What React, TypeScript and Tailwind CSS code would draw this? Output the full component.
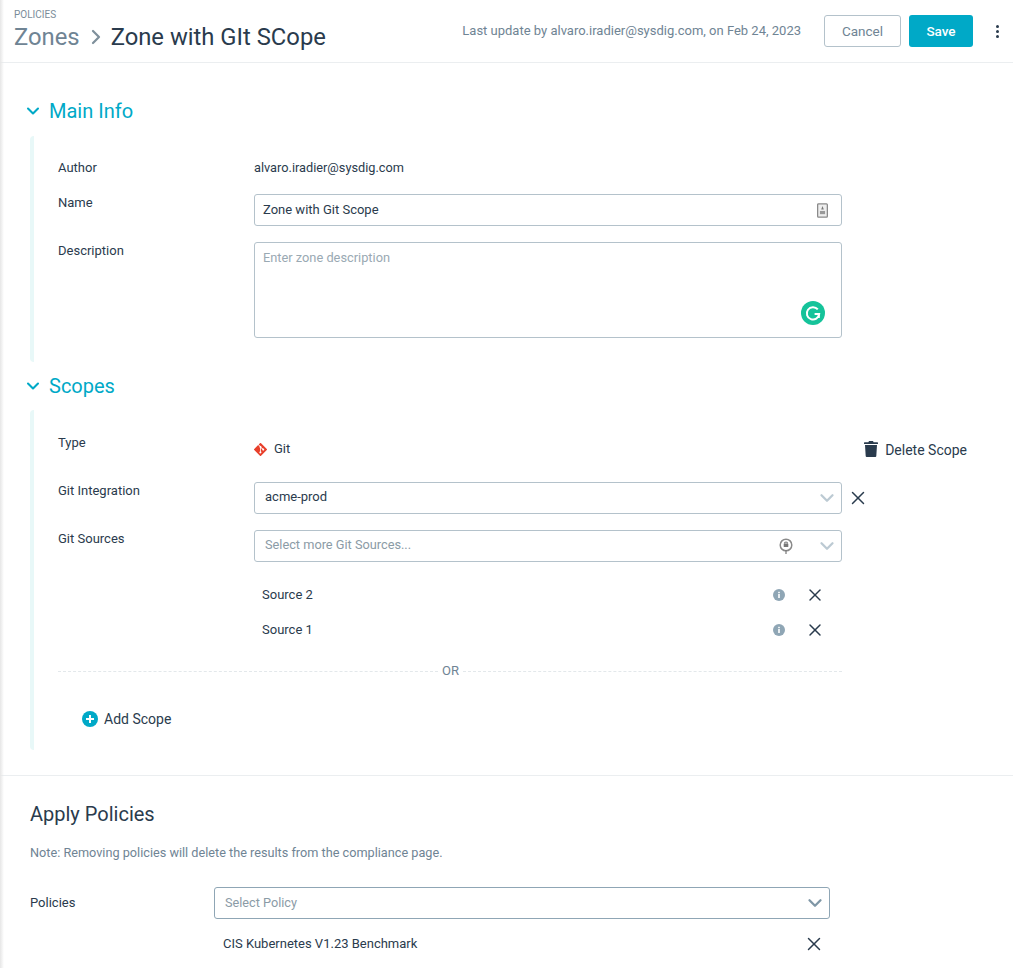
import { ChevronDown, ChevronRight, X } from "lucide-react";

function SectionHeading({ title }: { title: string }) {
  return (
    <div className="flex h-7 items-center pl-[23px]">
      <ChevronDown className="h-5 w-5 text-[#00a9c7]" strokeWidth={2.5} />
      <h2 className="ml-[6px] text-[20px] leading-7 text-[#00a9c7]">{title}</h2>
    </div>
  );
}

function GitIcon() {
  return (
    <svg viewBox="0 0 16 16" className="h-[13px] w-[13px]">
      <path
        fill="#e8402b"
        d="M15.7 7.3 8.7.3a1 1 0 0 0-1.4 0L5.8 1.8l1.8 1.8a1.2 1.2 0 0 1 1.5 1.5l1.8 1.8a1.2 1.2 0 1 1-.7.7L8.5 6v4.5a1.2 1.2 0 1 1-1-.1V5.9a1.2 1.2 0 0 1-.6-1.6L5.1 2.5.3 7.3a1 1 0 0 0 0 1.4l7 7a1 1 0 0 0 1.4 0l7-7a1 1 0 0 0 0-1.4Z"
      />
    </svg>
  );
}

function InfoIcon() {
  return (
    <svg viewBox="0 0 12 12" className="h-3 w-3">
      <circle cx="6" cy="6" r="6" fill="#8fa6b5" />
      <rect x="5.2" y="5" width="1.6" height="4" fill="#fff" />
      <rect x="5.2" y="2.8" width="1.6" height="1.4" fill="#fff" />
    </svg>
  );
}

function SourceRow({ name }: { name: string }) {
  return (
    <div className="flex h-[35px] w-[588px] items-center pl-2 pr-[17px]">
      <span className="flex-1">{name}</span>
      <InfoIcon />
      <X className="ml-5 h-5 w-5 text-[#2a3b4d]" strokeWidth={1.75} />
    </div>
  );
}

export default function App() {
  return (
    <div
      className="relative h-[968px] overflow-hidden bg-white text-[13px] leading-[18px] text-[#2a3b4d] antialiased"
      style={{ fontFamily: "Roboto, sans-serif" }}
    >
      <div className="absolute inset-y-0 left-0 w-[4px] bg-gradient-to-r from-[#e6e6e6] to-transparent" />

      <header className="flex h-[63px] items-center border-b border-[#ebeef0] pl-[14px] pr-[13px]">
        <div className="flex-1 pb-[2px]">
          <p className="text-[10px] leading-3 text-[#7a8c99]">POLICIES</p>
          <div className="mt-[1px] flex items-center text-[23.8px] leading-[30px]">
            <span className="text-[#6f8494]">Zones</span>
            <ChevronRight className="ml-[4px] mr-[3px] h-6 w-6 text-[#7f909c]" strokeWidth={2.25} />
            <span>Zone with GIt SCope</span>
          </div>
        </div>
        <span className="text-[#6f8494]">
          Last update by alvaro.iradier@sysdig.com, on Feb 24, 2023
        </span>
        <button className="ml-[23px] h-[32px] w-[77px] rounded-[3px] border border-[#b4c2cb] text-[13.5px] text-[#6f8494]">
          Cancel
        </button>
        <button className="ml-2 h-[32px] w-[64px] rounded-[3px] bg-[#00a9c7] text-[13.5px] font-medium text-white">
          Save
        </button>
        <div className="ml-[21px] flex w-[6px] flex-col items-center gap-[2px]">
          <span className="h-[3px] w-[3px] rounded-full bg-[#2a3b4d]" />
          <span className="h-[3px] w-[3px] rounded-full bg-[#2a3b4d]" />
          <span className="h-[3px] w-[3px] rounded-full bg-[#2a3b4d]" />
        </div>
      </header>

      <section className="pt-[34px]">
        <SectionHeading title="Main Info" />
        <div className="ml-[30px] mt-[11px] h-[226px] rounded-sm border-l-4 border-[#e8f8f8] pl-6 pt-[21px]">
          <div className="flex h-[22px] items-center">
            <span className="w-[196px]">Author</span>
            <span className="text-[12.75px]">alvaro.iradier@sysdig.com</span>
          </div>
          <div className="mt-[15px] flex">
            <span className="w-[196px]">Name</span>
            <div className="flex h-8 w-[588px] items-center rounded-[3px] border border-[#b4c2cb] pl-2 pr-[13px]">
              <span className="flex-1">Zone with Git Scope</span>
              <svg viewBox="0 0 12 16" className="h-[15px] w-[11px]">
                <rect x="0.7" y="0.7" width="10.6" height="14.6" rx="1" fill="#eee" stroke="#8a8a8a" strokeWidth="1.4" />
                <path d="M6 3 7.4 7H4.6Z" fill="#777" />
                <rect x="3.2" y="8.5" width="5.6" height="3.5" fill="#999" />
              </svg>
            </div>
          </div>
          <div className="mt-4 flex">
            <span className="w-[196px]">Description</span>
            <div className="relative h-[96px] w-[588px] rounded-[3px] border border-[#b4c2cb] px-2 pt-[6px] text-[12.8px] text-[#9aa9b3]">
              Enter zone description
              <svg viewBox="0 0 24 24" className="absolute bottom-[12px] right-[16px] h-6 w-6">
                <circle cx="12" cy="12" r="12" fill="#15c39a" />
                <path d="M16.800 8.400A6.200 6.200 0 1 0 18.200 13h-4.600" fill="none" stroke="#fff" strokeWidth="2" />
                <path d="M17.800 13.600v3.400" stroke="#fff" strokeWidth="2" />
              </svg>
            </div>
          </div>
        </div>
      </section>

      <section className="pt-[10px]">
        <SectionHeading title="Scopes" />
        <div className="ml-[30px] mt-[10px] h-[340px] rounded-sm border-l-4 border-[#e8f8f8] pl-6 pt-[24px]">
          <div className="flex h-[28px] w-[909px]">
            <span className="w-[196px]">Type</span>
            <div className="flex h-[30px] flex-1 items-center">
              <GitIcon />
              <span className="ml-[7px] flex-1">Git</span>
              <svg viewBox="0 0 14 16" className="h-[16px] w-[14px]">
                <path
                  fill="#2a3b4d"
                  d="M5 0h4l.6 1.200H13.400c.3 0 .6.3.6.6v1.100H0V1.800c0-.3.3-.6.6-.6h3.800L5 0ZM1 4h12l-.7 11a1 1 0 0 1-1 1H2.700a1 1 0 0 1-1-1L1 4Z"
                />
              </svg>
              <span className="ml-[7px] pt-[1px] text-[14px]">Delete Scope</span>
            </div>
          </div>
          <div className="mt-[20px] flex">
            <span className="w-[196px]">Git Integration</span>
            <div className="flex h-8 w-[588px] items-center rounded-[3px] border border-[#b4c2cb] pl-[10px] pr-[3px]">
              <span className="flex-1 pb-[2px]">acme-prod</span>
              <ChevronDown className="h-[22px] w-[22px] text-[#bccad3]" strokeWidth={2.5} />
            </div>
            <X className="ml-[5px] mt-[5px] h-[22px] w-[22px]" strokeWidth={1.6} />
          </div>
          <div className="mt-4 flex">
            <span className="w-[196px]">Git Sources</span>
            <div className="flex h-8 w-[588px] items-center rounded-[3px] border border-[#b4c2cb] pl-[10px] pr-[3px] text-[#8b9ba6]">
              <span className="flex-1 pb-[2px] text-[12.75px]">Select more Git Sources...</span>
              <svg viewBox="0 0 16 18" className="mr-[22px] h-[18px] w-[16px]">
                <circle cx="8" cy="8" r="5.800" fill="none" stroke="#8a8a8a" strokeWidth="1.500" />
                <rect x="5.700" y="6.500" width="4.600" height="3.500" rx="0.500" fill="#777" />
                <path d="M6.500 6.500a1.500 1.500 0 0 1 3 0M8 13v4" fill="none" stroke="#777" strokeWidth="1.200" />
              </svg>
              <ChevronDown className="h-[22px] w-[22px] text-[#bccad3]" strokeWidth={2.5} />
            </div>
          </div>
          <div className="ml-[196px] mt-[15px]">
            <SourceRow name="Source 2" />
            <SourceRow name="Source 1" />
          </div>
          <div className="mt-[16px] flex h-4 w-[784px] items-center">
            <div className="flex-1 border-t border-dashed border-[#e3e8eb]" />
            <span className="px-1 text-[#6f8494]">OR</span>
            <div className="w-[379px] border-t border-dashed border-[#e3e8eb]" />
          </div>
          <div className="ml-6 mt-[24px] flex h-[32px] items-center">
            <svg viewBox="0 0 16 16" className="h-4 w-4">
              <circle cx="8" cy="8" r="8" fill="#00a9c7" />
              <path d="M8 4v8M4 8h8" stroke="#fff" strokeWidth="2" />
            </svg>
            <span className="ml-[6px] text-[14px]">Add Scope</span>
          </div>
        </div>
      </section>

      <section className="mt-[25px] border-t border-[#ebeef0] pl-[30px] pt-[24px]">
        <h2 className="text-[20px] leading-7">Apply Policies</h2>
        <p className="mt-[17px] text-[12.7px] leading-[16px] text-[#6f8494]">
          Note: Removing policies will delete the results from the compliance page.
        </p>
        <div className="mt-[26px] flex">
          <span className="w-[184px] pt-[7px]">Policies</span>
          <div className="flex h-8 w-[616px] items-center rounded-[3px] border border-[#8fa6b5] pl-[10px] pr-[3px] text-[12.7px] text-[#8b9ba6]">
            <span className="flex-1">Select Policy</span>
            <ChevronDown className="h-[22px] w-[22px] text-[#7f97a6]" strokeWidth={2.5} />
          </div>
        </div>
        <div className="ml-[184px] flex h-[50px] w-[616px] items-center pl-[9px] pr-[5px]">
          <span className="flex-1">CIS Kubernetes V1.23 Benchmark</span>
          <X className="h-[22px] w-[22px]" strokeWidth={1.6} />
        </div>
      </section>
    </div>
  );
}
